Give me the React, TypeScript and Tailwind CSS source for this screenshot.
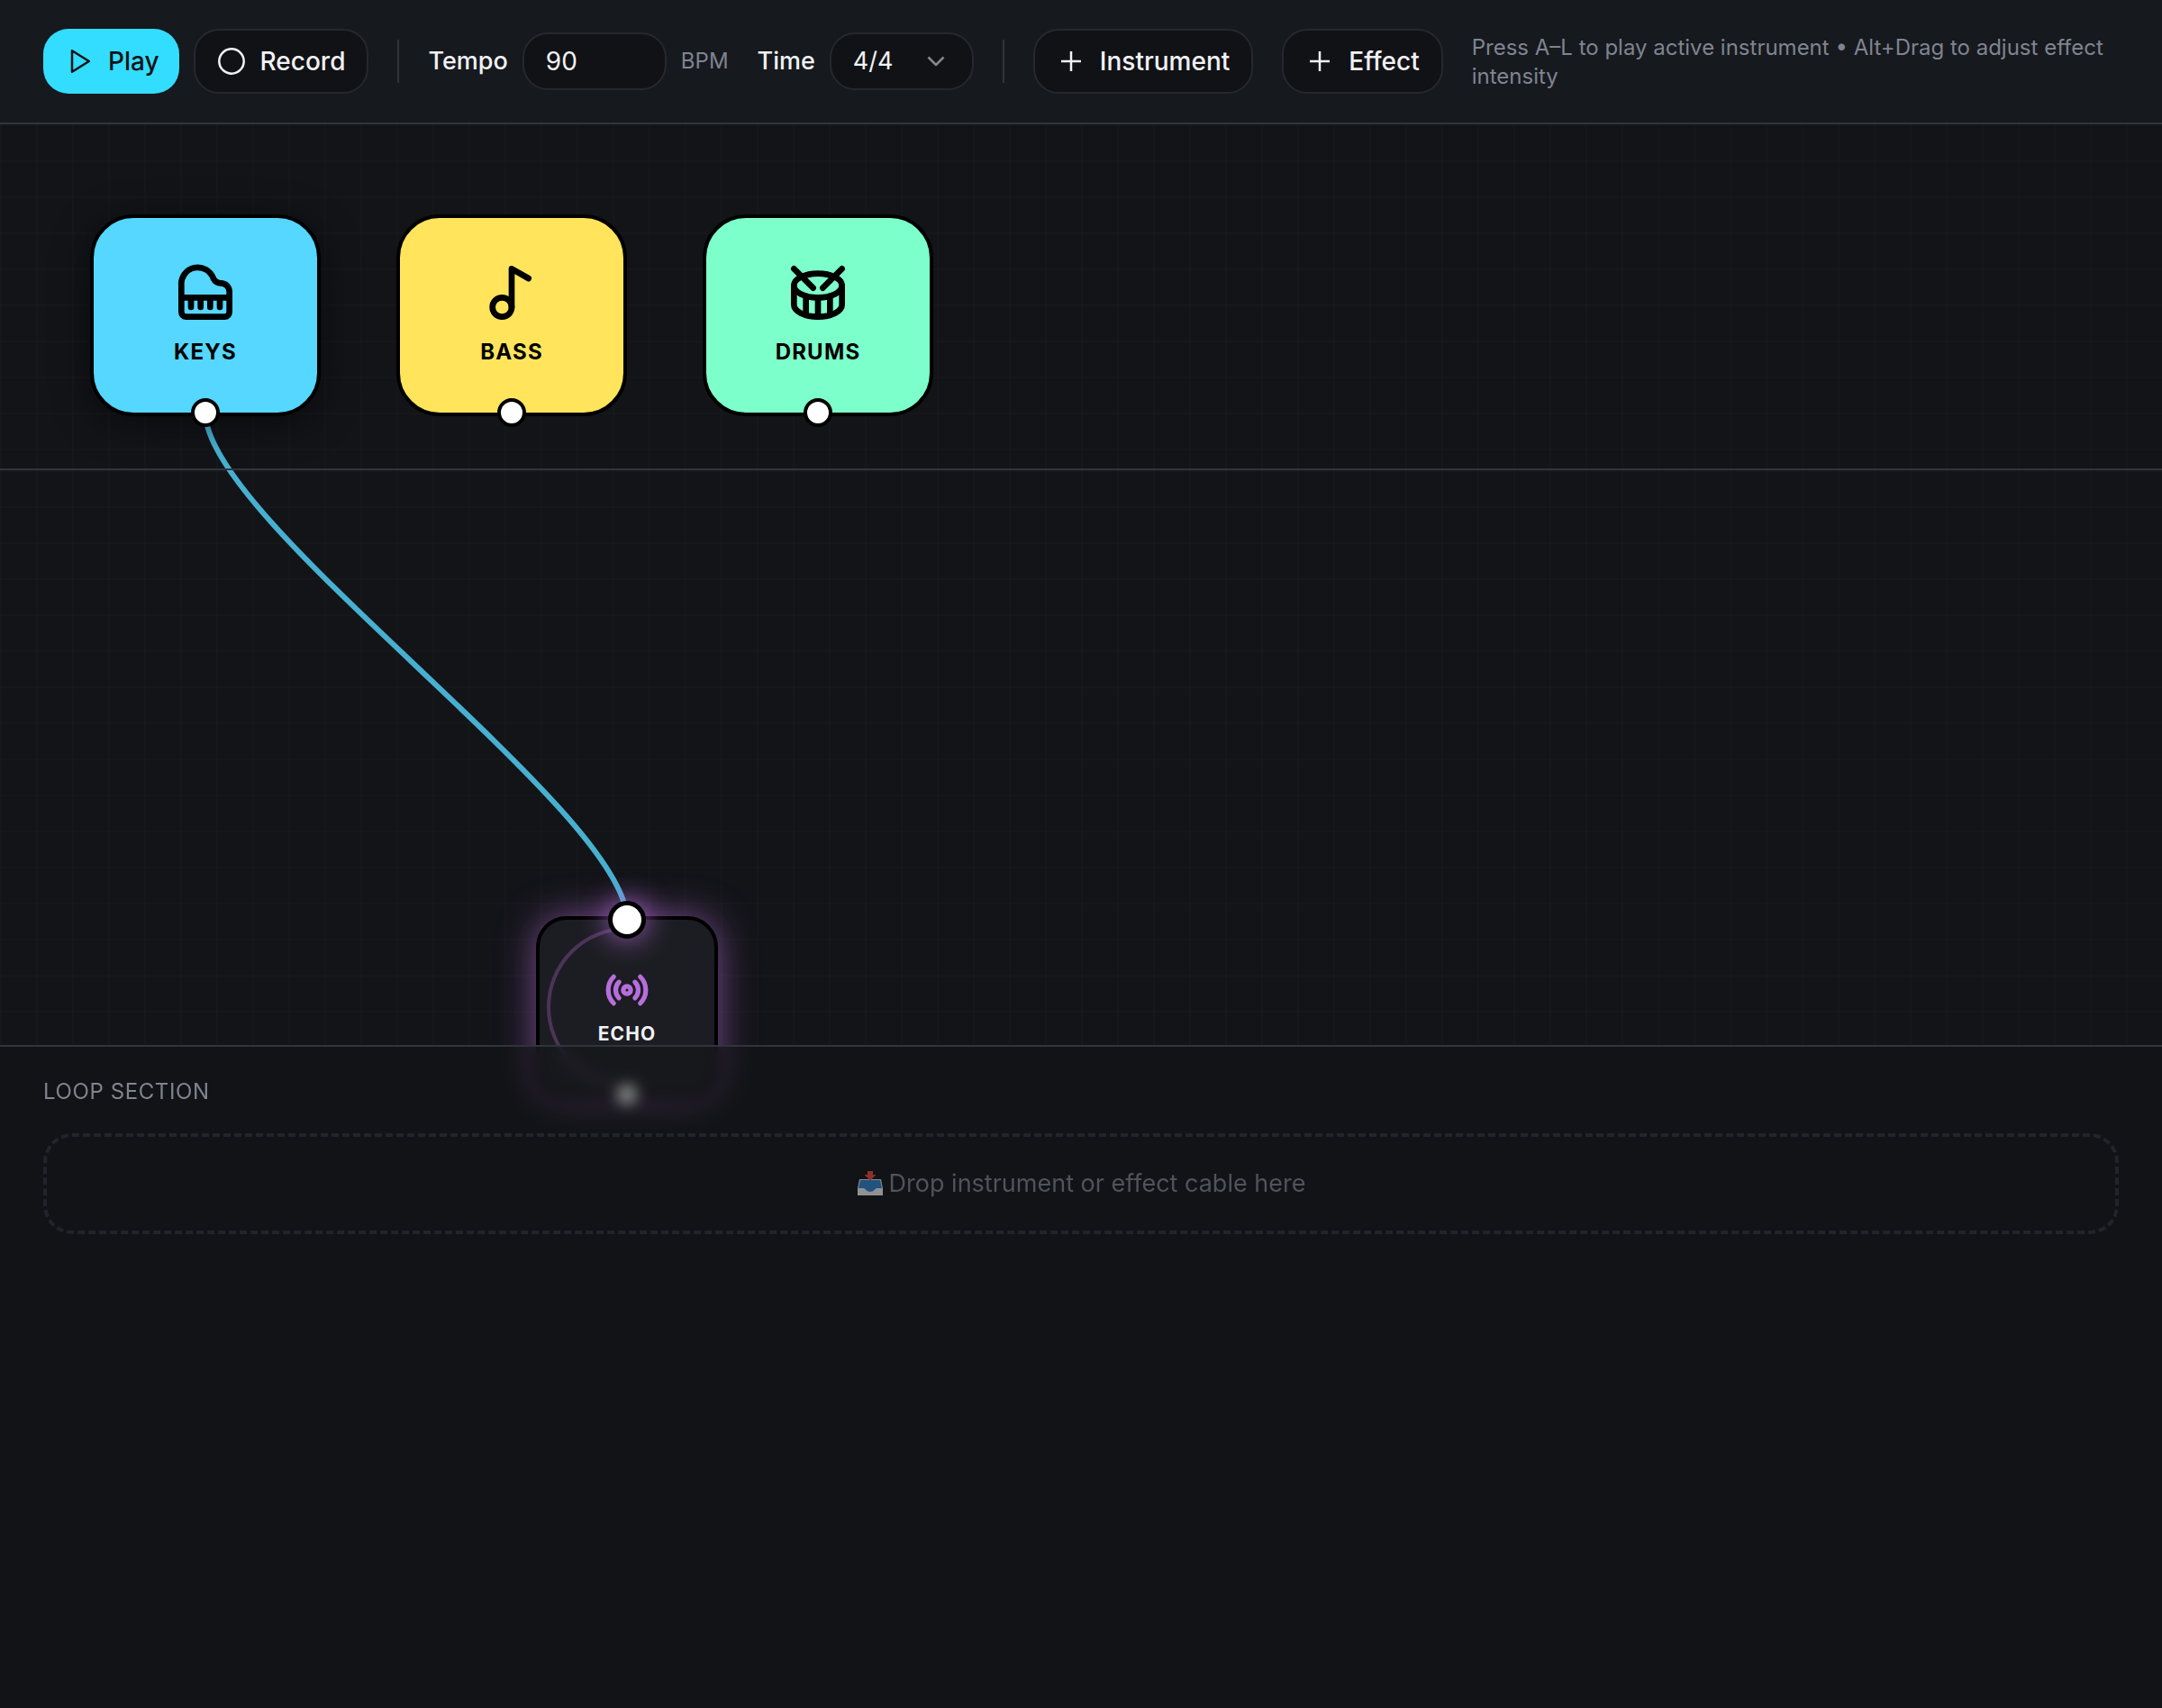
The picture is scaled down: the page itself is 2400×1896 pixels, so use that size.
import { useState } from "react";
import { Piano, Music2, Drum, Radio } from "lucide-react";
import type { ReactNode } from "react";

const gridClass =
  "bg-[linear-gradient(to_right,rgba(255,255,255,0.012)_2px,transparent_2px),linear-gradient(to_bottom,rgba(255,255,255,0.012)_2px,transparent_2px)] bg-[size:40px_40px]";

function Glyph({ d, className = "" }: { d: string; className?: string }) {
  return (
    <svg
      viewBox="0 0 32 32"
      fill="none"
      stroke="currentColor"
      strokeWidth="2.500"
      strokeLinejoin="round"
      className={"size-8 shrink-0 " + className}
      aria-hidden="true"
    >
      <path d={d} />
    </svg>
  );
}

const PLAY = "M8 4.200L26.800 16L8 27.800Z";
const CIRCLE = "M16 2.300a13.700 13.700 0 1 0 0 27.400a13.700 13.700 0 1 0 0-27.400Z";
const PLUS = "M16 5V27M5 16H27";
const CHEVRON = "M7.500 11.500L16 20L24.500 11.500";

function Divider() {
  return <div className="h-12 w-0.5 shrink-0 bg-[#30343c]" />;
}

function ToolButton({ icon, label }: { icon: string; label: string }) {
  return (
    <button
      type="button"
      className="flex h-18 shrink-0 items-center gap-4 rounded-[28px] border-2 border-[#26282e] bg-[#111216] px-6 text-[28px] leading-10 font-medium text-[#f1f2f4]"
    >
      <Glyph d={icon} />
      {label}
    </button>
  );
}

function Port({ className }: { className: string }) {
  return (
    <span
      className={"absolute left-1/2 size-8 -translate-x-1/2 rounded-full border-4 border-black bg-white " + className}
    />
  );
}

function Instrument({ icon, name, className }: { icon: ReactNode; name: string; className: string }) {
  return (
    <div
      className={
        "absolute top-[100px] flex h-56 w-64 flex-col items-center justify-center gap-4 rounded-[48px] border-4 border-black pt-0.5 text-black " +
        className
      }
    >
      {icon}
      <span className="text-2xl leading-9 font-bold tracking-wider">{name}</span>
      <Port className="-bottom-4" />
    </div>
  );
}

function InboxEmoji() {
  return (
    <svg viewBox="0 0 30 30" className="size-[30px] shrink-0" aria-hidden="true">
      <path d="M3 10h24l2 10v8H1v-8z" fill="#d9dbdd" />
      <path d="M4 11h22l2 9h-5c-3 0-3 4-8 4s-5-4-8-4H2z" fill="#2d7fc4" />
      <path d="M12 1h6v4h3.500l-6.500 6.500L8.500 5H12z" fill="#e2453c" />
      <path d="M1 20h6c3 0 3 4 8 4s5-4 8-4h6v8H1z" fill="#e8e8e8" />
    </svg>
  );
}

export default function App() {
  const [tempo, setTempo] = useState("90");
  const [meter, setMeter] = useState("4/4");

  return (
    <div className="flex min-h-screen flex-col bg-[#111316] font-['Inter',sans-serif] text-[#f1f2f4]">
      <header className="flex items-center gap-8 border-b-2 border-[#30343c] bg-[#16191e] px-12 py-8">
        <div className="flex shrink-0 gap-4">
          <button
            type="button"
            className="flex h-18 items-center gap-4 rounded-[28px] bg-[#33ddff] pr-[22px] pl-6 text-[28px] leading-10 font-medium text-[#111216]"
          >
            <Glyph d={PLAY} />
            Play
          </button>
          <ToolButton icon={CIRCLE} label="Record" />
        </div>
        <Divider />
        <div className="flex shrink-0 items-center gap-4">
          <label htmlFor="tempo" className="text-[27px] leading-10 font-medium">
            Tempo
          </label>
          <input
            id="tempo"
            value={tempo}
            onChange={(e) => setTempo(e.target.value)}
            className="h-16 w-40 rounded-[28px] border-2 border-[#26282e] bg-[#111216] px-6 text-[28px]"
          />
          <span className="text-2xl leading-8 text-[#80848f]">BPM</span>
        </div>
        <div className="flex shrink-0 items-center gap-4">
          <label htmlFor="meter" className="text-[27px] leading-10 font-medium">
            Time
          </label>
          <div className="relative">
            <select
              id="meter"
              value={meter}
              onChange={(e) => setMeter(e.target.value)}
              className="h-16 w-40 appearance-none rounded-[28px] border-2 border-[#26282e] bg-[#111216] px-6 text-[27px]"
            >
              <option>4/4</option>
              <option>3/4</option>
            </select>
            <Glyph d={CHEVRON} className="pointer-events-none absolute top-4 right-[26px] text-[#85878b]" />
          </div>
        </div>
        <Divider />
        <ToolButton icon={PLUS} label="Instrument" />
        <ToolButton icon={PLUS} label="Effect" />
        <p className="flex-1 pt-0.5 text-2xl leading-8 text-[#80848f]">
          Press A–L to play active instrument • Alt+Drag to adjust effect intensity
        </p>
      </header>

      <main className="relative bg-[#131418]">
        <svg className="pointer-events-none absolute top-0 left-0 h-full w-full" aria-hidden="true">
          <path d="M228 320 C228 440 696 763 696 883" fill="none" stroke="#55d7ff" strokeOpacity="0.8" strokeWidth="6" />
        </svg>
        <section aria-label="Instruments" className={"relative h-96 border-b-2 border-[#30343c] " + gridClass}>
          <Instrument
            icon={<Piano className="size-16" strokeWidth={2.5} />}
            name="KEYS"
            className="left-[100px] bg-[#55d7ff] shadow-[0_8px_40px_rgba(0,0,0,0.5)]"
          />
          <Instrument icon={<Music2 className="size-16" strokeWidth={2.5} />} name="BASS" className="left-[440px] bg-[#ffe45c]" />
          <Instrument icon={<Drum className="size-16" strokeWidth={2.5} />} name="DRUMS" className="left-[780px] bg-[#7dffcb]" />
        </section>
        <section aria-label="Effects" className={"relative h-[638px] " + gridClass}>
          <div className="absolute top-[495px] left-[595px] flex size-[202px] flex-col items-center justify-center gap-2 rounded-[34px] border-4 border-black bg-[#1c1d22] pt-0.5 shadow-[0_0_40px_rgba(183,110,220,0.6)]">
            <svg viewBox="0 0 194 194" className="absolute inset-0" fill="none" aria-hidden="true">
              <path d="M97 10a87 87 0 0 0 0 174" stroke="#b76edc" strokeOpacity="0.3" strokeWidth="4" />
            </svg>
            <Radio className="size-[50px] text-[#b76edc]" strokeWidth={2.5} />
            <span className="text-[21px] leading-8 font-bold tracking-wider">ECHO</span>
            <span className="absolute -top-[21px] left-1/2 size-[42px] -translate-x-1/2 rounded-full border-[5px] border-black bg-white shadow-[0_0_32px_rgba(183,110,220,0.9)]" />
            <Port className="-bottom-4" />
          </div>
        </section>
      </main>

      <section
        aria-label="Loop section"
        className="relative flex flex-1 flex-col gap-7 border-t-2 border-[#30343c] bg-[#111316]/50 px-12 py-8 backdrop-blur-[8px]"
      >
        <h2 className="text-2xl leading-9 tracking-wide text-[#80848f]">LOOP SECTION</h2>
        <div className="flex h-28 items-center justify-center gap-1.5 rounded-[32px] border-4 border-dashed border-[#22242b] text-[27px] text-[#50535b]">
          <span className="opacity-60">
            <InboxEmoji />
          </span>
          Drop instrument or effect cable here
        </div>
      </section>
    </div>
  );
}
